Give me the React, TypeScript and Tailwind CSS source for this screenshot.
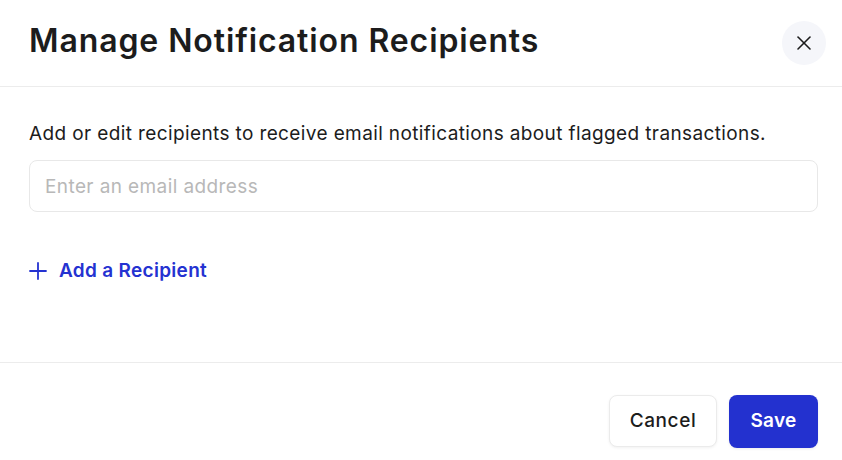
import React, { useState } from "react";
import { X } from "lucide-react";

export default function App() {
  const [email, setEmail] = useState("");

  return (
    <div
      className="w-[842px] h-[460px] bg-white text-[#1c1c1c] flex flex-col"
      style={{ fontFamily: "Inter, 'Noto Sans', sans-serif" }}
    >
      {/* header */}
      <div className="h-[87px] shrink-0 flex items-center justify-between pl-[29px] pr-[16px] border-b border-[#ececec]">
        <h2 className="text-[32px] font-semibold tracking-[0.9px] pb-[4px]">Manage Notification Recipients</h2>
        <button className="w-[44px] h-[44px] rounded-full bg-[#f5f6fa] flex items-center justify-center text-[#1c1c1c]">
          <X className="w-[24px] h-[24px]" strokeWidth={1.6} />
        </button>
      </div>

      {/* body */}
      <div className="h-[276px] shrink-0 pl-[29px] pr-[24px] pt-[33px] border-b border-[#ececec]">
        <p className="text-[19px] leading-[27px] tracking-[0.38px]">
          Add or edit recipients to receive email notifications about flagged transactions.
        </p>
        <input
          value={email}
          onChange={(e) => setEmail(e.target.value)}
          placeholder="Enter an email address"
          className="mt-[13px] w-full h-[52px] rounded-[8px] border border-[#e8e8e8] px-[15px] text-[19px] tracking-[0.4px] placeholder:text-[#b8b8b8] outline-none"
        />
        <button className="mt-[45px] flex items-center gap-[12px] text-[#2432d1] font-semibold text-[19px] tracking-[0.3px]">
          <svg width="18" height="18" viewBox="0 0 18 18" fill="none" stroke="currentColor" strokeWidth="1.8" strokeLinecap="round">
            <path d="M9 1v16M1 9h16" />
          </svg>
          Add a Recipient
        </button>
      </div>

      {/* footer */}
      <div className="flex-1 flex items-start justify-end gap-[12px] pr-[24px] pt-[32px]">
        <button className="w-[108px] h-[52px] rounded-[8px] border border-[#ebebeb] bg-white text-[19px] font-medium tracking-[0.6px] shadow-[0_1px_3px_rgba(0,0,0,0.06)]">
          Cancel
        </button>
        <button className="w-[89px] h-[53px] rounded-[8px] bg-[#2331cf] text-white text-[19px] font-semibold tracking-[0.3px] shadow-[0_1px_3px_rgba(0,0,0,0.08)]">
          Save
        </button>
      </div>
    </div>
  );
}
